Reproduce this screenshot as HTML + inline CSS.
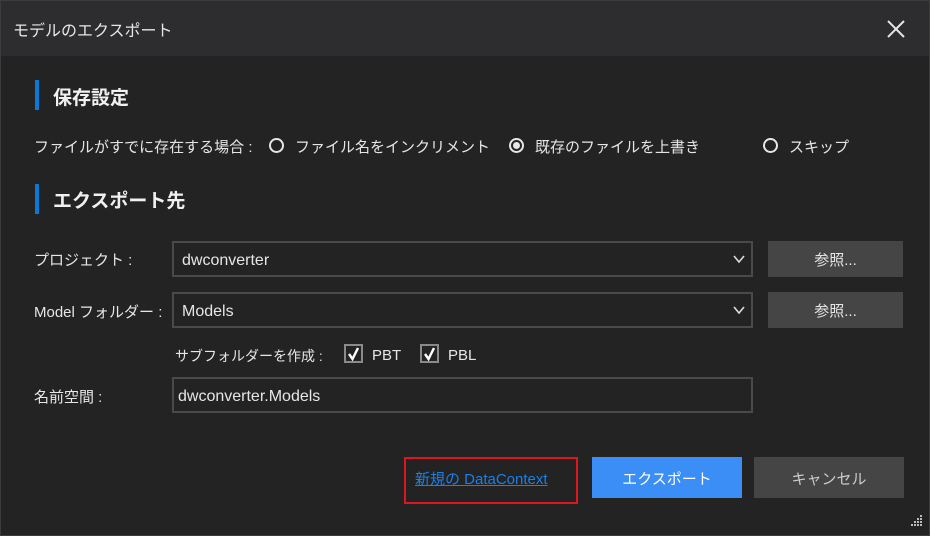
<!DOCTYPE html>
<html><head><meta charset="utf-8"><style>
*{box-sizing:border-box;margin:0;padding:0}
body{width:930px;height:536px;background:#232323;font-family:"Liberation Sans","Noto Sans CJK JP",sans-serif;color:#e6e6e6;position:relative;overflow:hidden;font-size:15px}
.win{position:absolute;left:0;top:0;width:930px;height:536px;border:1px solid #3c3c3c}
.title{position:absolute;left:0;top:0;width:930px;height:56px;background:#2d2d30;border:1px solid #3c3c3c;border-bottom:none}
.abs{position:absolute;white-space:nowrap;line-height:20px}
.bar{position:absolute;left:35px;width:4px;height:30px;background:#0a78d7}
h2{position:absolute;left:53px;font-size:19px;font-weight:bold;color:#f0f0f0;line-height:24px}
.radio{position:absolute;width:15px;height:15px;border:2px solid #e6e6e6;border-radius:50%}
.combo{position:absolute;left:172px;width:581px;height:36px;border:2px solid #4a4a4a;background:#232323;font-size:16px;line-height:36px;padding-left:8px}
.btn{position:absolute;left:768px;width:135px;height:36px;background:#454545;text-align:center;font-size:15px;line-height:40px}
.chk{position:absolute;width:19px;height:19px;border:2px solid #8a8a8a}
</style></head><body>
<div class="win"></div>
<div class="title"></div>
<div class="abs" style="left:13px;top:22px;font-size:16px">モデルのエクスポート</div>
<svg class="abs" style="left:886px;top:19px" width="20" height="20"><path d="M2 2L18 18M18 2L2 18" stroke="#e6e6e6" stroke-width="2"/></svg>
<div class="bar" style="top:80px"></div><h2 style="top:87px">保存設定</h2>
<div class="abs" style="left:34px;top:138px">ファイルがすでに存在する場合 :</div>
<div class="radio" style="left:269px;top:138px"></div>
<div class="abs" style="left:295px;top:138px">ファイル名をインクリメント</div>
<div class="radio" style="left:509px;top:138px"><div style="width:7px;height:7px;border-radius:50%;background:#e6e6e6;margin:2px"></div></div>
<div class="abs" style="left:535px;top:138px">既存のファイルを上書き</div>
<div class="radio" style="left:763px;top:138px"></div>
<div class="abs" style="left:789px;top:138px">スキップ</div>
<div class="bar" style="top:184px"></div><h2 style="top:190px">エクスポート先</h2>
<div class="abs" style="left:34px;top:251px">プロジェクト :</div>
<div class="combo" style="top:241px">dwconverter</div>
<svg class="abs" style="left:733px;top:254px" width="12" height="10"><path d="M1 2L6 8L11 2" stroke="#ddd" stroke-width="1.6" fill="none"/></svg>
<div class="btn" style="top:241px">参照...</div>
<div class="abs" style="left:34px;top:303px">Model フォルダー :</div>
<div class="combo" style="top:292px">Models</div>
<svg class="abs" style="left:733px;top:305px" width="12" height="10"><path d="M1 2L6 8L11 2" stroke="#ddd" stroke-width="1.6" fill="none"/></svg>
<div class="btn" style="top:292px">参照...</div>
<div class="abs" style="left:175px;top:346px;font-size:14px">サブフォルダーを作成 :</div>
<div class="chk" style="left:344px;top:344px"></div>
<svg class="abs" style="left:344px;top:344px" width="19" height="19"><path d="M5 10L8.5 15L14 4" stroke="#fff" stroke-width="2.4" fill="none"/></svg>
<div class="abs" style="left:372px;top:346px">PBT</div>
<div class="chk" style="left:420px;top:344px"></div>
<svg class="abs" style="left:420px;top:344px" width="19" height="19"><path d="M5 10L8.5 15L14 4" stroke="#fff" stroke-width="2.4" fill="none"/></svg>
<div class="abs" style="left:448px;top:346px">PBL</div>
<div class="abs" style="left:34px;top:388px">名前空間 :</div>
<div class="combo" style="top:377px;padding-left:4px">dwconverter.Models</div>
<div class="abs" style="left:404px;top:457px;width:174px;height:47px;border:2px solid #e0161e"></div>
<div class="abs" style="left:415px;top:470px;color:#1a7fe8;text-decoration:underline">新規の DataContext</div>
<div class="abs" style="left:592px;top:457px;width:150px;height:41px;background:#3a8ef6;text-align:center;line-height:45px;color:#fff">エクスポート</div>
<div class="abs" style="left:754px;top:457px;width:150px;height:41px;background:#454545;text-align:center;line-height:45px;color:#ccc">キャンセル</div>
<svg class="abs" style="left:910px;top:515px" width="14" height="14" fill="#bbb"><rect x="10" y="0" width="2" height="2"/><rect x="7" y="3" width="2" height="2"/><rect x="10" y="3" width="2" height="2"/><rect x="4" y="6" width="2" height="2"/><rect x="7" y="6" width="2" height="2"/><rect x="10" y="6" width="2" height="2"/><rect x="1" y="9" width="2" height="2"/><rect x="4" y="9" width="2" height="2"/><rect x="7" y="9" width="2" height="2"/><rect x="10" y="9" width="2" height="2"/></svg>
</body></html>
